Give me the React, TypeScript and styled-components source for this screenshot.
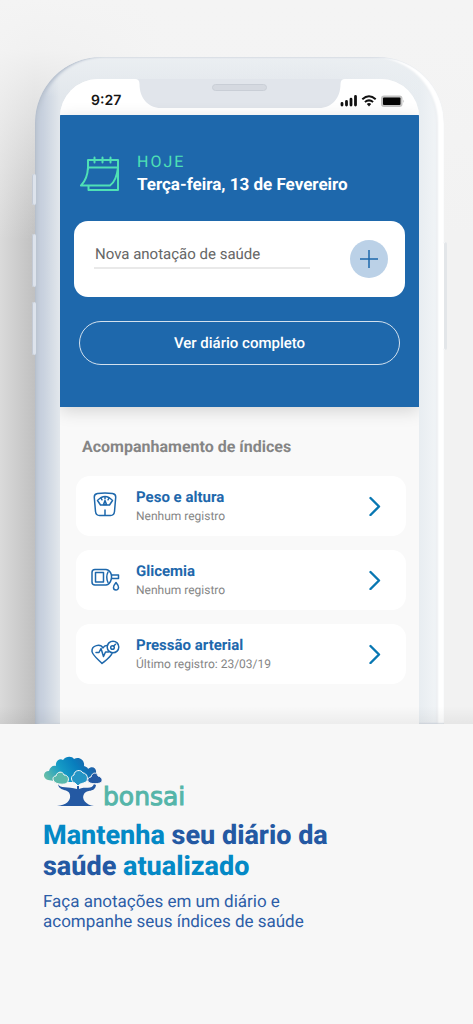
import React from "react";
import styled, { createGlobalStyle } from "styled-components";

const GlobalStyle = createGlobalStyle`
  *, *::before, *::after { box-sizing: border-box; }
  body {
    margin: 0;
    background: #f7f7f7;
    font-family: Roboto, "Liberation Sans", sans-serif;
    text-rendering: geometricPrecision;
  }
  h1, h2, h3, p, ul { margin: 0; padding: 0; }
  button, input { font-family: inherit; text-rendering: inherit; }
`;

const blue = "#1e68ac";
const mint = "#4fe0b5";

const Page = styled.main`
  min-height: 100vh;
  background: #f7f7f7;
`;

const Stage = styled.section`
  position: relative;
  overflow: hidden;
  padding: 57px 29px 0 35px;
  background:
    linear-gradient(to bottom, #f4f4f4 0, #f4f4f4f0 50px, #f4f4f400 240px),
    linear-gradient(to right, #dadada 0, #c0c0c0 35px, #f2f2f2 160px, #f2f2f2 100%);

  &::after {
    content: "";
    position: absolute;
    inset: auto 0 0;
    height: 18px;
    background: linear-gradient(to bottom, #0000, #0000000d);
  }
`;

const Phone = styled.div`
  position: relative;
  padding: 22px 25px 0;
  border-radius: 66px 66px 0 0;
  background:
    linear-gradient(to bottom, #ebeff2 0, #e1e5eb00 40px),
    linear-gradient(to right, #c4cddb 0, #c8d1de 8px, #e2e7ec 25px, #e1e5eb 70%, #e8edf1 94%, #f5f7f9 100%);
  box-shadow:
    inset 1px 0 2px #b3bdcb,
    inset 5px 0 3px -1px #c0c9d6,
    inset -6px 0 2px #fff,
    inset -8px 0 2px #eceff2;
`;

const SideKey = styled.span<{ $side: "left" | "right"; $top: number; $height: number }>`
  position: absolute;
  ${(p) => p.$side}: -3px;
  top: ${(p) => p.$top}px;
  width: 4px;
  height: ${(p) => p.$height}px;
  border-radius: 2px;
  background: ${(p) => (p.$side === "left" ? "#dde3ec" : "#e3e6e9")};
  box-shadow: inset 1px 0 0 ${(p) => (p.$side === "left" ? "#c3cad5" : "#fff")};
`;

const Screen = styled.div`
  position: relative;
  overflow: hidden;
  border-radius: 38px 38px 0 0;
  background: #f9f9f9;
`;

const StatusBar = styled.div`
  display: flex;
  align-items: center;
  justify-content: space-between;
  height: 36px;
  padding: 8px 14px 0 31px;
  background: #fff;
`;

const Clock = styled.span`
  font: 600 14px/20px Inter, sans-serif;
  color: #151515;
`;

const StatusIcons = styled.svg`
  width: 66px;
  height: 14px;
`;

const Notch = styled.svg`
  position: absolute;
  top: 0;
  left: 50%;
  width: 210px;
  height: 30px;
  transform: translateX(-50%);
`;

const Hero = styled.header`
  position: relative;
  padding: 37px 14px 42px;
  background: ${blue};
  box-shadow: 0 4px 16px #00000026;
`;

const Today = styled.div`
  display: flex;
  align-items: center;
  gap: 17px;
  padding: 0 6px;
`;

const CalendarIcon = styled.svg`
  flex: none;
  width: 40px;
  height: 38px;
`;

const TodayLabel = styled.p`
  font-size: 16px;
  line-height: 20px;
  letter-spacing: 2px;
  color: ${mint};
`;

const TodayDate = styled.h2`
  font-size: 17px;
  font-weight: 700;
  line-height: 26px;
  color: #fff;
`;

const NoteCard = styled.form`
  display: flex;
  align-items: center;
  justify-content: space-between;
  gap: 40px;
  height: 76px;
  margin: 23px 0 24px;
  padding: 0 17px 0 20px;
  border-radius: 14px;
  background: #fff;
`;

const NoteInput = styled.input`
  flex: 1;
  min-width: 0;
  height: 32px;
  margin-bottom: 13px;
  padding: 4px 1px 0;
  border: 0;
  border-bottom: 2px solid #e9e9e9;
  background: none;
  font-size: 15px;
  color: #666;
  outline: none;
  &::placeholder { color: #666; opacity: 1; }
`;

const AddButton = styled.button`
  display: grid;
  place-items: center;
  width: 38px;
  height: 38px;
  padding: 0;
  border: 0;
  border-radius: 50%;
  background: #bbd1e7;
`;

const DiaryButton = styled.button`
  display: block;
  width: calc(100% - 10px);
  height: 44px;
  margin: 0 5px;
  border: 1px solid #d3e1ee;
  border-radius: 22px;
  background: none;
  font-size: 15px;
  font-weight: 500;
  color: #fff;
`;

const Tracking = styled.section`
  padding: 28px 13px 40px 16px;
`;

const TrackingTitle = styled.h2`
  padding-left: 6px;
  font-size: 16px;
  font-weight: 700;
  line-height: 24px;
  color: #858585;
`;

const TrackingList = styled.ul`
  display: grid;
  gap: 14px;
  margin-top: 17px;
  list-style: none;
`;

const TrackingLink = styled.a`
  display: flex;
  align-items: center;
  height: 60px;
  padding: 0 24px 0 14px;
  border-radius: 14px;
  background: #fff;
  text-decoration: none;
`;

const IndexIcon = styled.svg`
  flex: none;
  width: 30px;
  height: 30px;
  margin-right: 16px;
  fill: none;
  stroke: ${blue};
  stroke-width: 1.5;
  stroke-linecap: round;
  stroke-linejoin: round;
`;

const IndexText = styled.span`
  flex: 1;
`;

const IndexName = styled.strong`
  display: block;
  font-size: 15px;
  font-weight: 700;
  line-height: 20px;
  color: ${blue};
`;

const IndexStatus = styled.span`
  display: block;
  font-size: 12px;
  line-height: 18px;
  color: #858585;
`;

const Chevron = styled.svg`
  width: 14px;
  height: 20px;
`;

const Promo = styled.section`
  padding: 32px 43px 90px;
`;

const Brand = styled.div`
  display: flex;
  align-items: flex-end;
`;

const Tree = styled.svg`
  flex: none;
  width: 60px;
  height: 52px;
`;

const BrandName = styled.span`
  font: 25px/22px "DejaVu Sans", sans-serif;
  color: #55b5a9;
  -webkit-text-stroke: 1px #55b5a9;
`;

const Headline = styled.h1`
  margin-top: 12px;
  font-size: 27px;
  font-weight: 800;
  line-height: 31px;
  color: #2459a3;
`;

const Accent = styled.span`
  color: #0489c6;
`;

const Pitch = styled.p`
  margin-top: 10px;
  font-size: 17px;
  line-height: 20px;
  color: #2c5da7;
`;

const indices = [
  {
    name: "Peso e altura",
    status: "Nenhum registro",
    icon: (
      <>
        <path d="M7.500 2.500Q15 1.500 22.500 2.500Q26 3 25.700 6.500L24.500 20.500Q24 24.500 20.500 24.500H9.500Q6 24.500 5.500 20.500L4.300 6.500Q4 3 7.500 2.500Z" />
        <path d="M7.500 9.500Q15 1.500 22.500 9.500L19.500 14H10.500Z" />
        <path d="M11 7.200l1 1.600M15 5.800v2M19 7.200l-1 1.600M15 9.500l-1.500 4h3zM15 19v5" />
      </>
    ),
  },
  {
    name: "Glicemia",
    status: "Nenhum registro",
    icon: (
      <>
        <path d="M5 4.500H16Q20 5 21.500 10H28.500V13.500H21.500Q20 19.500 16 20H5Q2 20 2 17V7.500Q2 4.500 5 4.500Z" />
        <path d="M5.500 7.500H13.500V17H5.500ZM18 7Q15.500 12 18 17.500M21.500 10V13.500" />
        <path d="M26 17.500Q23.500 20.500 23.500 22.500A2.500 2.500 0 0 0 28.500 22.500Q28.500 20.500 26 17.500Z" />
      </>
    ),
  },
  {
    name: "Pressão arterial",
    status: "Último registro: 23/03/19",
    icon: (
      <>
        <path d="M17.500 6.500Q14.500 6 13 9C10.500 4.500 1.500 6 2 12.500C2.500 16 7.500 20 12 24.500C17.500 20 20.500 18 22 14.500" />
        <circle cx="23" cy="8" r="5.800" />
        <circle cx="22.500" cy="8.500" r="1.800" />
        <path d="M23.500 7.200L25.500 5.200M6 13.500H9L11 9.500L13.500 17.500L15.500 13H18.500" />
      </>
    ),
  },
];

export default function App() {
  return (
    <Page>
      <GlobalStyle />
      <Stage>
        <Phone>
          <SideKey $side="left" $top={117} $height={31} />
          <SideKey $side="left" $top={177} $height={53} />
          <SideKey $side="left" $top={245} $height={53} />
          <SideKey $side="right" $top={185} $height={108} />
          <Screen>
            <StatusBar>
              <Clock>9:27</Clock>
              <StatusIcons viewBox="0 0 66 14" aria-hidden="true">
                <path d="M3 11V9.500M7.500 11V7.500M12 11V5.200M16.500 11V2.500" stroke="#111" strokeWidth="2.800" strokeLinecap="round" />
                <path d="M23.300 5.200Q30 -0.600 36.700 5.200M25.900 8Q30 4.700 34.100 8" fill="none" stroke="#111" strokeWidth="2" />
                <path d="M27.800 9.900Q30 8.300 32.200 9.900L30 12.500Z" fill="#111" />
                <rect x="42" y="1.500" width="21.500" height="11.500" rx="3" fill="#c4c4c4" />
                <rect x="44" y="3.500" width="17.500" height="7.500" rx="1" fill="#050505" />
                <path d="M64.300 5.500Q66 7.200 64.300 9Z" fill="#bbb" />
              </StatusIcons>
            </StatusBar>
            <Notch viewBox="0 0 210 30" aria-hidden="true">
              <path d="M0 0Q4.500 0 4.500 5C4.500 19 13 29 26 29H184C197 29 205.500 19 205.500 5Q205.500 0 210 0Z" fill="#e1e5eb" />
              <rect x="77.500" y="5.500" width="54" height="6" rx="3" fill="#d5d9e0" stroke="#c9ced6" />
            </Notch>
            <Hero>
              <Today>
                <CalendarIcon viewBox="0 0 40 38" fill="none" stroke={mint} strokeWidth="2" strokeLinejoin="round" strokeLinecap="round" aria-hidden="true">
                  <path d="M8 13V4H38V34H8.500V30M8 11.500H38M14.500 1.500V6.500M22.500 1.500V6.500M30.500 1.500V6.500" />
                  <path d="M8 11.500Q7.500 23 1 29.500H30Q36.500 25 38 11.500" />
                </CalendarIcon>
                <div>
                  <TodayLabel>HOJE</TodayLabel>
                  <TodayDate>Terça-feira, 13 de Fevereiro</TodayDate>
                </div>
              </Today>
              <NoteCard onSubmit={(e) => e.preventDefault()}>
                <NoteInput aria-label="Nova anotação de saúde" placeholder="Nova anotação de saúde" />
                <AddButton type="submit" aria-label="Adicionar">
                  <svg width="20" height="20" viewBox="0 0 20 20" stroke={blue} strokeWidth="1.500" aria-hidden="true">
                    <path d="M10 1V19M1 10H19" />
                  </svg>
                </AddButton>
              </NoteCard>
              <DiaryButton type="button">Ver diário completo</DiaryButton>
            </Hero>
            <Tracking>
              <TrackingTitle>Acompanhamento de índices</TrackingTitle>
              <TrackingList>
                {indices.map((item) => (
                  <li key={item.name}>
                    <TrackingLink href="#">
                      <IndexIcon viewBox="0 0 30 30" aria-hidden="true">{item.icon}</IndexIcon>
                      <IndexText>
                        <IndexName>{item.name}</IndexName>
                        <IndexStatus>{item.status}</IndexStatus>
                      </IndexText>
                      <Chevron viewBox="0 0 14 20" fill="none" stroke="#0877b2" strokeWidth="2.400" strokeLinecap="round" strokeLinejoin="round" aria-hidden="true">
                        <path d="M2.500 2L11 10.500L2.500 19" />
                      </Chevron>
                    </TrackingLink>
                  </li>
                ))}
              </TrackingList>
            </Tracking>
          </Screen>
        </Phone>
      </Stage>
      <Promo>
        <Brand>
          <Tree viewBox="0 0 60 52" aria-hidden="true">
            <defs>
              <linearGradient id="crown" x1="0" y1="0.700" x2="1" y2="0.400">
                <stop offset="0" stopColor="#66bda9" />
                <stop offset="0.350" stopColor="#159bc6" />
                <stop offset="0.650" stopColor="#087dbd" />
                <stop offset="1" stopColor="#2459a3" />
              </linearGradient>
            </defs>
            <path d="M5 24C-1 22 0 15 6 15C7 11 10 9 13 10C12 5 17 2 20 4C23 0 29 0 31 3C36 0 42 4 41 10C44 11 45 12 45 13C49 9 54 12 53 17C56 19 54 24 50 25H36L30 26H18Z" fill="url(#crown)" />
            <path d="M15 28C17 33 25 30 34 33V28H36V33C42 30 49 34 51 28L53 29C52 37 44 33 41 38C38 43 43 49 51 50H14C23 49 28 45 27 39C26 32 16 36 15 28Z" fill="#2459a3" />
            <g stroke="#f7f7f7" strokeWidth="1">
              <path d="M13 27C9 25 9 20 13 20C14 15 20 15 21 19C25 19 27 23 24 27C21 29 15 28 13 27Z" fill="#59b8aa" />
              <path d="M32 27C28 26 27 20 31 19C31 14 38 13 40 17C44 17 46 23 43 26C39 28 37 27 35 30Z" fill="#2595c5" />
              <path d="M47 27C43 25 45 21 48 21C49 16 54 16 55 20C60 21 60 26 57 27C53 28 51 28 47 27Z" fill="#2459a3" />
            </g>
          </Tree>
          <BrandName>bonsai</BrandName>
        </Brand>
        <Headline>
          <Accent>Mantenha</Accent> seu diário da<br />
          saúde <Accent>atualizado</Accent>
        </Headline>
        <Pitch>
          Faça anotações em um diário e<br />
          acompanhe seus índices de saúde
        </Pitch>
      </Promo>
    </Page>
  );
}
